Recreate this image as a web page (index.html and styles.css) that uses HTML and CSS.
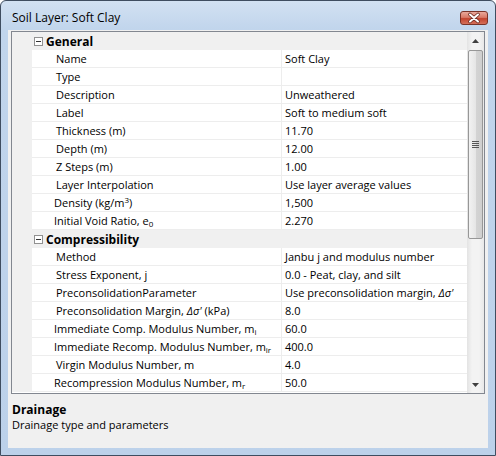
FILE: index.html
```html
<!DOCTYPE html>
<html>
<head>
<meta charset="utf-8">
<link rel="stylesheet" href="styles.css">
</head>
<body>
<div class="window">
  <div class="titlebar">
    <span class="title">Soil Layer: Soft Clay</span>
    <div class="close">
      <svg width="28" height="14" viewBox="0 0 28 14">
        <path d="M10 3.5 L18 10.5 M18 3.5 L10 10.5" stroke="#6b2a22" stroke-width="3.6" stroke-linecap="round"/>
        <path d="M10 3.5 L18 10.5 M18 3.5 L10 10.5" stroke="#ffffff" stroke-width="2" stroke-linecap="round"/>
      </svg>
    </div>
  </div>
  <div class="client">
    <div class="grid">
      <div class="rows">
        <div class="cat"><span class="toggle"></span><span class="cat-label">General</span></div>
        <div class="row"><div class="margin"></div><div class="name">Name</div><div class="value">Soft Clay</div></div>
        <div class="row"><div class="margin"></div><div class="name">Type</div><div class="value"></div></div>
        <div class="row"><div class="margin"></div><div class="name">Description</div><div class="value">Unweathered</div></div>
        <div class="row"><div class="margin"></div><div class="name">Label</div><div class="value">Soft to medium soft</div></div>
        <div class="row"><div class="margin"></div><div class="name">Thickness (m)</div><div class="value">11.70</div></div>
        <div class="row"><div class="margin"></div><div class="name">Depth (m)</div><div class="value">12.00</div></div>
        <div class="row"><div class="margin"></div><div class="name">Z Steps (m)</div><div class="value">1.00</div></div>
        <div class="row"><div class="margin"></div><div class="name">Layer Interpolation</div><div class="value">Use layer average values</div></div>
        <div class="row"><div class="margin"></div><div class="name alt">Density (kg/m<sup>3</sup>)</div><div class="value">1,500</div></div>
        <div class="row"><div class="margin"></div><div class="name alt">Initial Void Ratio, e<sub>0</sub></div><div class="value">2.270</div></div>
        <div class="cat"><span class="toggle"></span><span class="cat-label">Compressibility</span></div>
        <div class="row"><div class="margin"></div><div class="name">Method</div><div class="value">Janbu j and modulus number</div></div>
        <div class="row"><div class="margin"></div><div class="name">Stress Exponent, j</div><div class="value">0.0 - Peat, clay, and silt</div></div>
        <div class="row"><div class="margin"></div><div class="name">PreconsolidationParameter</div><div class="value">Use preconsolidation margin, <i>Δσ'</i></div></div>
        <div class="row"><div class="margin"></div><div class="name">Preconsolidation Margin, <i>Δσ'</i> (kPa)</div><div class="value">8.0</div></div>
        <div class="row"><div class="margin"></div><div class="name alt">Immediate Comp. Modulus Number, m<sub>i</sub></div><div class="value">60.0</div></div>
        <div class="row"><div class="margin"></div><div class="name alt">Immediate Recomp. Modulus Number, m<sub>ir</sub></div><div class="value">400.0</div></div>
        <div class="row"><div class="margin"></div><div class="name">Virgin Modulus Number, m</div><div class="value">4.0</div></div>
        <div class="row"><div class="margin"></div><div class="name alt">Recompression Modulus Number, m<sub>r</sub></div><div class="value">50.0</div></div>
      </div>
      <div class="scrollbar">
        <div class="sb-btn"><svg width="7" height="4" viewBox="0 0 7 4"><path d="M0 4 L3.5 0 L7 4 Z" fill="#404040"/></svg></div>
        <div class="sb-track">
          <div class="sb-thumb">
            <div class="grip"><span></span><span></span><span></span><span></span></div>
          </div>
        </div>
        <div class="sb-btn"><svg width="7" height="4" viewBox="0 0 7 4"><path d="M0 0 L7 0 L3.5 4 Z" fill="#404040"/></svg></div>
      </div>
    </div>
    <div class="desc">
      <div class="desc-title">Drainage</div>
      <div class="desc-text">Drainage type and parameters</div>
    </div>
  </div>
</div>
</body>
</html>
```
FILE: styles.css
```css
html, body {
  margin: 0;
  padding: 0;
}
body {
  width: 496px;
  height: 456px;
  background: #ffffff;
  font-family: "Open Sans", "Noto Sans", "DejaVu Sans", sans-serif;
  font-size: 11px;
  color: #000;
}
.window {
  box-sizing: border-box;
  width: 496px;
  height: 456px;
  border: 1px solid #3f4d60;
  border-radius: 6px 6px 0 0;
  background: linear-gradient(#d2e1f2 0px, #c1d5ec 28px, #bcd1ea 100%);
  display: flex;
  flex-direction: column;
  overflow: hidden;
}
.titlebar {
  height: 29px;
  box-sizing: border-box;
  padding: 4px 7px 0 11px;
  display: flex;
  align-items: center;
}
.title {
  font-size: 12px;
  color: #000;
}
.close {
  margin-left: auto;
  width: 28px;
  height: 14px;
  box-sizing: border-box;
  border: 1px solid #7a3328;
  border-radius: 3px;
  background: linear-gradient(#e9a99b 0%, #d97a68 45%, #c2442f 55%, #d5705a 100%);
  display: flex;
  align-items: center;
  justify-content: center;
}
.close svg {
  display: block;
  margin: -1px;
}
.client {
  flex: 1;
  margin: 0 7px 7px 7px;
  background: #f0f0f0;
  padding: 1px 3px 0 3px;
  display: flex;
  flex-direction: column;
}
.grid {
  height: 363px;
  box-sizing: border-box;
  border: 1px solid #828790;
  background: #ffffff;
  display: flex;
  overflow: hidden;
}
.rows {
  flex: 1;
  overflow: hidden;
}
.row {
  display: grid;
  grid-template-columns: 20px 250px 1fr;
  height: 18px;
}
.margin {
  background: #f0f0f0;
}
.name, .value {
  box-sizing: border-box;
  height: 18px;
  line-height: 17px;
  border-bottom: 1px solid #ededed;
  white-space: nowrap;
  overflow: hidden;
}
.name {
  padding-left: 24px;
  border-right: 1px solid #ededed;
}
.name.alt {
  padding-left: 22px;
}
.value {
  padding-left: 3px;
}
sub, sup {
  font-size: 8px;
  line-height: 0;
}
sub {
  vertical-align: -2px;
}
sup {
  vertical-align: 4px;
}
.cat {
  height: 18px;
  background: #f0f0f0;
  display: flex;
  align-items: center;
}
.toggle {
  width: 9px;
  height: 9px;
  box-sizing: border-box;
  border: 1px solid #919191;
  background: #fff;
  margin-left: 22px;
  margin-right: 3px;
  position: relative;
}
.toggle::after {
  content: "";
  position: absolute;
  left: 1px;
  top: 3px;
  width: 5px;
  height: 1px;
  background: #333;
}
.cat-label {
  font-weight: bold;
  font-size: 12px;
}
.scrollbar {
  width: 17px;
  display: flex;
  flex-direction: column;
  background: linear-gradient(90deg, #e3e3e3, #f3f3f3 30%, #f3f3f3 70%, #e8e8e8);
}
.sb-btn {
  height: 17px;
  display: flex;
  align-items: center;
  justify-content: center;
}
.sb-track {
  flex: 1;
  padding: 1px 1px 0 1px;
}
.sb-thumb {
  height: 189px;
  box-sizing: border-box;
  border: 1px solid #979797;
  border-radius: 2px;
  background: linear-gradient(90deg, #f2f2f2, #e6e6e6 50%, #d4d4d4 51%, #cfcfcf);
  display: flex;
  align-items: center;
  justify-content: center;
}
.grip {
  display: flex;
  flex-direction: column;
  gap: 1px;
}
.grip span {
  display: block;
  width: 7px;
  height: 1px;
  background: #555;
}
.desc {
  padding: 8px 1px 0 1px;
}
.desc-title {
  font-weight: bold;
  font-size: 12px;
  line-height: 15px;
}
.desc-text {
  line-height: 15px;
}
```
